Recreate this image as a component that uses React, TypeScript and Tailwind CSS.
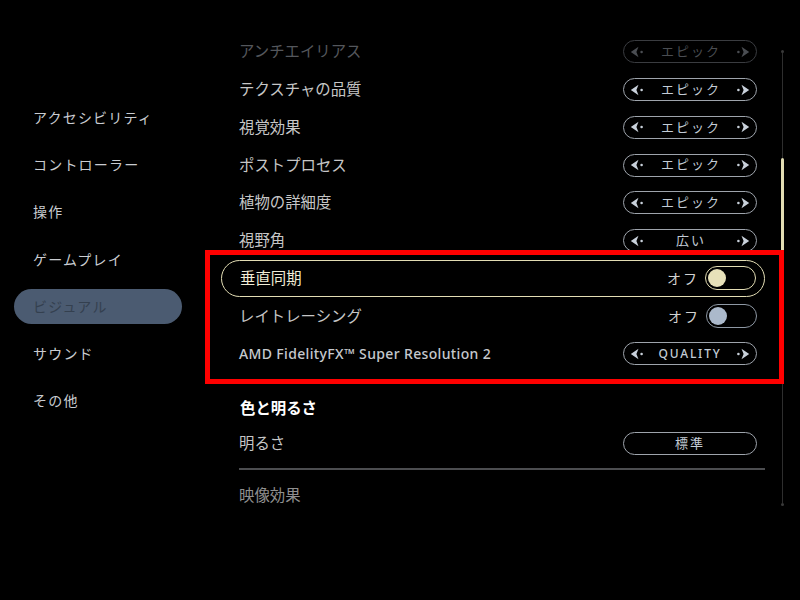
import React from 'react'

const jp = { fontFamily: '"Noto Sans", "Noto Sans CJK JP", sans-serif' }

const navItems = ['アクセシビリティ', 'コントローラー', '操作', 'ゲームプレイ', 'ビジュアル', 'サウンド', 'その他']

function Arrow({ dir, faded }: { dir: 'left' | 'right'; faded?: boolean }) {
  const color = faded ? '#4a4d52' : '#c9d1db'
  return (
    <svg width="14" height="12" viewBox="0 0 14 12" className={dir === 'right' ? 'rotate-180' : ''}>
      <path d="M0.8 6 L8.5 0.8 L6.4 6 L8.5 11.2 Z" fill={color} />
      <circle cx="11.6" cy="6" r="1.3" fill={color} />
    </svg>
  )
}

function Selector({ value, faded, latin }: { value: string; faded?: boolean; latin?: boolean }) {
  return (
    <div
      className={`flex items-center justify-between w-[134px] h-[23px] rounded-full border-[1.5px] px-[6px] ${
        faded ? 'border-[#3a3c40] text-[#4a4d52]' : 'border-[#9ea4ac] text-[#c3ccd6]'
      }`}
    >
      <Arrow dir="left" faded={faded} />
      <span className={latin ? 'text-[12px] tracking-[1.8px] font-medium' : 'text-[13px] tracking-[2px] pl-[2px]'}>{value}</span>
      <Arrow dir="right" faded={faded} />
    </div>
  )
}

function Toggle({ active }: { active?: boolean }) {
  return (
    <div className="flex items-center gap-[6px]">
      <span className="text-[14px] tracking-[2px] text-[#d2d2d2]">オフ</span>
      <div
        className={`flex items-center w-[51px] h-[24px] rounded-full border-[1.5px] px-[2px] ${
          active ? 'border-[#e3ddb4]' : 'border-[#8e98a4]'
        }`}
      >
        <div className={`w-[18px] h-[18px] rounded-full ${active ? 'bg-[#e7e1b9]' : 'bg-[#abb9cb]'}`} />
      </div>
    </div>
  )
}

function Row({
  label,
  children,
  faded,
  highlight,
}: {
  label: string
  children: React.ReactNode
  faded?: boolean
  highlight?: boolean
}) {
  return (
    <div
      className={`flex items-center justify-between h-[37.75px] pl-[18px] pr-[8px] rounded-full ${
        highlight ? 'border-[1.5px] border-[#e3ddb4] pl-[17px] pr-[6.5px]' : ''
      }`}
    >
      <span
        className={`text-[15.4px] ${
          faded ? 'text-[#54575c]' : highlight ? 'text-[#f1edd6]' : 'text-[#c6c6c6]'
        }`}
      >
        {label}
      </span>
      {children}
    </div>
  )
}

export default function App() {
  return (
    <div className="relative w-[800px] h-[600px] bg-black flex overflow-hidden" style={jp}>
      {/* sidebar */}
      <div className="w-[221px] shrink-0 pt-[100px] flex flex-col gap-[12.2px]">
        {navItems.map((item) => {
          const active = item === 'ビジュアル'
          return (
            <div
              key={item}
              className={`ml-[14px] w-[168px] h-[35px] flex items-center pl-[19px] rounded-full text-[14px] tracking-[1.2px] ${
                active ? 'bg-[#4b5b71] text-[#34404f]' : 'text-[#c9ccd1]'
              }`}
            >
              {item}
            </div>
          )
        })}
      </div>

      {/* main list */}
      <div className="w-[544px] shrink-0 pt-[33px] flex flex-col">
        <Row label="アンチエイリアス" faded>
          <Selector value="エピック" faded />
        </Row>
        <Row label="テクスチャの品質">
          <Selector value="エピック" />
        </Row>
        <Row label="視覚効果">
          <Selector value="エピック" />
        </Row>
        <Row label="ポストプロセス">
          <Selector value="エピック" />
        </Row>
        <Row label="植物の詳細度">
          <Selector value="エピック" />
        </Row>
        <Row label="視野角">
          <Selector value="広い" />
        </Row>
        <Row label="垂直同期" highlight>
          <Toggle active />
        </Row>
        <Row label="レイトレーシング">
          <Toggle />
        </Row>
        <div className="flex items-center justify-between h-[37.75px] pl-[18px] pr-[8px]">
          <span className="text-[14px] tracking-[0.35px] font-medium text-[#c6c9ce]">AMD FidelityFX™ Super Resolution 2</span>
          <Selector value="QUALITY" latin />
        </div>

        <div className="pl-[19px] mt-[22px] h-[28px] flex items-center text-[15.4px] font-bold text-white">色と明るさ</div>
        <div className="flex items-center justify-between h-[42px] pl-[18px] pr-[8px]">
          <span className="text-[15.4px] text-[#c6c6c6]">明るさ</span>
          <div className="w-[134px] h-[23px] rounded-full border-[1.5px] border-[#9ea4ac] flex items-center justify-center text-[13px] tracking-[2px] text-[#c3ccd6]">
            標準
          </div>
        </div>
        <div className="ml-[18px] mt-[3px] h-[2px] bg-[#4c4d50]" />
        <div className="pl-[18px] h-[52px] flex items-center text-[15.4px] text-[#8f8f8f]">映像効果</div>
      </div>

      {/* scrollbar */}
      <div className="ml-[16px] pt-[50px] flex flex-col items-center w-[3px]">
        <div className="w-[3px] h-[3px] rounded-full bg-[#3a3a3a]" />
        <div className="w-[1px] h-[105px] bg-[#2e2e2e]" />
        <div className="w-[3px] h-[192px] rounded-full bg-[#e2ddb3]" />
        <div className="w-[1px] h-[153px] bg-[#2e2e2e]" />
        <div className="w-[3px] h-[3px] rounded-full bg-[#3a3a3a]" />
      </div>

      {/* annotation box */}
      <div className="absolute left-[205px] top-[250px] w-[579px] h-[134px] border-[5px] border-[#ff0000]" />
    </div>
  )
}
